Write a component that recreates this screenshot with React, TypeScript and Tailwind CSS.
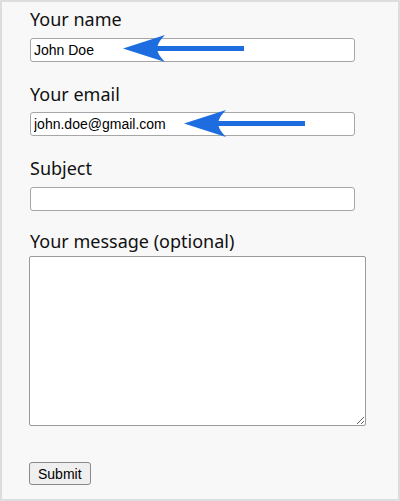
import React from "react";

function Arrow({ className }: { className: string }) {
  return (
    <svg
      className={className}
      width="122"
      height="28"
      viewBox="0 0 122 28"
      xmlns="http://www.w3.org/2000/svg"
    >
      <path
        d="M0 13.5 L42 0 Q36 6 34.5 11 L121 11 L121 16 L34.5 16 Q36 21 42 27 Z"
        fill="#1d6de0"
      />
    </svg>
  );
}

export default function App() {
  const label = "h-[24px] leading-[24px] text-[18px] text-[#111] font-['Noto_Sans',sans-serif]";
  const input =
    "block w-[325px] h-[24px] border border-[#a6a6a6] rounded-[3px] bg-white px-[3px] text-[14px] text-black font-['Liberation_Sans',Arial,sans-serif] outline-none";
  return (
    <div className="w-[400px] h-[501px] border-2 border-[#dddddd] bg-[#f8f8f8] pl-[28px] pt-[5px] flex flex-col items-start">
      <div className={label}>Your name</div>
      <div className="relative mt-[7px]">
        <input className={input} defaultValue="John Doe" />
        <Arrow className="absolute left-[93px] top-[-3px]" />
      </div>

      <div className={label + " mt-[20px]"}>Your email</div>
      <div className="relative mt-[6px]">
        <input className={input} defaultValue="john.doe@gmail.com" />
        <Arrow className="absolute left-[154px] top-[-2px]" />
      </div>

      <div className={label + " mt-[20px]"}>Subject</div>
      <div className="mt-[7px]">
        <input className={input} defaultValue="" />
      </div>

      <div className={label + " mt-[18px]"}>Your message (optional)</div>
      <textarea
        className="block mt-[3px] -ml-[1px] w-[337px] h-[170px] border border-[#9a9a9a] rounded-[2px] bg-white outline-none"
        defaultValue=""
      />

      <button className="mt-[36px] -ml-[1px] h-[23px] px-[8px] border border-[#8a8a8a] rounded-[3px] bg-[#efefef] text-[14px] text-black font-['Liberation_Sans',Arial,sans-serif] leading-none">
        Submit
      </button>
    </div>
  );
}
